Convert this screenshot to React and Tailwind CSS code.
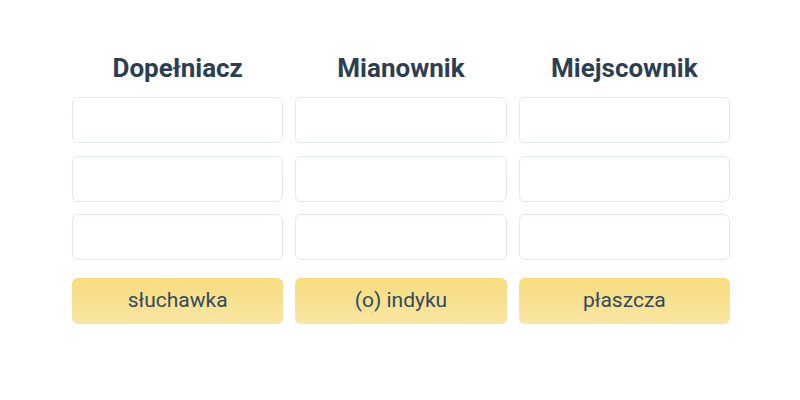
import React from "react";

const columns = [
  { title: "Dopełniacz", answer: "słuchawka" },
  { title: "Mianownik", answer: "(o) indyku" },
  { title: "Miejscownik", answer: "płaszcza" },
];

const App = () => {
  return (
    <div
      className="w-[800px] h-[400px] bg-white pt-[52px]"
      style={{ fontFamily: "Roboto, 'Liberation Sans', sans-serif" }}
    >
      <div className="w-[658px] ml-[72px] grid grid-cols-3 gap-x-3">
        {columns.map((col) => (
          <div key={col.title} className="flex flex-col">
            <h2 className="text-[26px] leading-8 font-bold text-center text-[#2c3e50] mb-[13px]">
              {col.title}
            </h2>
            <div className="flex flex-col gap-[12.5px]">
              {[0, 1, 2].map((i) => (
                <div
                  key={i}
                  className="h-[46px] rounded-md border border-[#e3e8ee] bg-white"
                />
              ))}
            </div>
            <div className="mt-[18px] h-[46px] rounded-md bg-gradient-to-b from-[#f7dc7e] to-[#f9e6a2] flex items-center justify-center text-[21px] text-[#34495e]">
              {col.answer}
            </div>
          </div>
        ))}
      </div>
    </div>
  );
};

export default App;
